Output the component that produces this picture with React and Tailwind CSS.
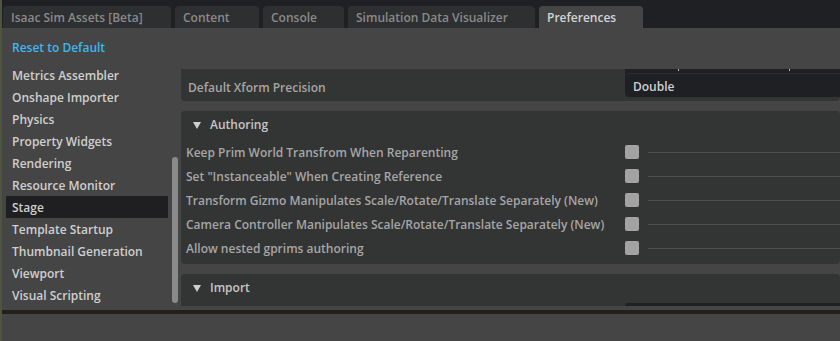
import React from "react";

const tabs = [
    { label: "Isaac Sim Assets [Beta]", w: "w-[168px]" },
    { label: "Content", w: "w-[84px]" },
    { label: "Console", w: "w-[81px]" },
    { label: "Simulation Data Visualizer", w: "w-[187px]" },
    { label: "Preferences", w: "w-[104px]", active: true },
];

const pages = [
    "Metrics Assembler",
    "Onshape Importer",
    "Physics",
    "Property Widgets",
    "Rendering",
    "Resource Monitor",
    "Stage",
    "Template Startup",
    "Thumbnail Generation",
    "Viewport",
    "Visual Scripting",
];

const authoring = [
    "Keep Prim World Transfrom When Reparenting",
    'Set "Instanceable" When Creating Reference',
    "Transform Gizmo Manipulates Scale/Rotate/Translate Separately (New)",
    "Camera Controller Manipulates Scale/Rotate/Translate Separately (New)",
    "Allow nested gprims authoring",
];

function Triangle() {
    return (
        <svg width="8" height="7" viewBox="0 0 8 7" className="shrink-0">
            <polygon points="0,0 8,0 4,7" fill="#cfcfcf" />
        </svg>
    );
}

function FrameHeader({ title }) {
    return (
        <div className="h-[29px] flex items-center gap-[9px] pl-[12px] pb-[1px] text-[#c6c6c6]">
            <Triangle />
            <span>{title}</span>
        </div>
    );
}

function CheckRow({ label }) {
    return (
        <div className="h-[24px] flex items-center">
            <span className="w-[444px] pl-[5px] pt-[2px] text-[#a6a6a6] whitespace-nowrap">{label}</span>
            <span className="w-[14px] h-[14px] rounded-[2px] bg-[#a2a2a2]" />
            <span className="flex-1 ml-[9px] h-px bg-[#4a4f4f]" />
        </div>
    );
}

export default function App() {
    return (
        <div className="w-[840px] h-[341px] bg-[#454545] flex flex-col overflow-hidden border-l-2 border-[#4d5540] font-['Open_Sans',sans-serif] font-semibold text-[12px] leading-none">
            {/* tab strip */}
            <div className="h-[28px] bg-[#1f2023] flex items-end gap-[4px] pl-[1px] shrink-0">
                {tabs.map((t) => (
                    <div
                        key={t.label}
                        className={`${t.w} h-[22px] rounded-t-[4px] flex items-center pl-[8px] pt-[2px] whitespace-nowrap ${
                            t.active ? "bg-[#454545] text-[#d4d4d4]" : "bg-[#2e2f31] text-[#8a8a8a]"
                        }`}
                    >
                        {t.label}
                    </div>
                ))}
            </div>

            {/* preferences window */}
            <div className="h-[36px] flex items-center pl-[10px] shrink-0">
                <span className="text-[#3db7ef] pt-[3px]">Reset to Default</span>
            </div>

            <div className="h-[246px] flex shrink-0">
                {/* page list */}
                <div className="w-[179px] flex shrink-0">
                    <div className="w-[166px] pl-[4px]">
                        {pages.map((p) => (
                            <div
                                key={p}
                                className={`h-[22px] flex items-center pl-[6px] pt-[2px] text-[#cfcfcf] ${
                                    p === "Stage" ? "bg-[#1f1f21]" : ""
                                }`}
                            >
                                {p}
                            </div>
                        ))}
                    </div>
                    <div className="ml-[4px] w-[6px] mt-[93px] h-[146px] rounded-[3px] bg-[#8a8a8a]" />
                </div>

                {/* settings scroll area */}
                <div className="flex-1 flex flex-col pt-[5px]">
                    <div className="h-[237px] overflow-hidden flex flex-col gap-[10px]">
                        <div className="h-[32px] shrink-0 bg-[#333434] rounded-b-[4px] flex items-start">
                            <span className="w-[444px] h-[28px] flex items-center pl-[7px] pt-[10px] text-[#a6a6a6]">
                                Default Xform Precision
                            </span>
                            <div className="flex-1 h-[28px] bg-[#1f2023] rounded-bl-[4px] flex flex-col">
                                <div className="h-[4px] flex">
                                    <span className="ml-[53px] w-px h-[2px] bg-[#bdbdbd]" />
                                    <span className="ml-[110px] w-px h-[2px] bg-[#bdbdbd]" />
                                </div>
                                <div className="flex-1 flex items-center pl-[8px] pt-[3px] text-[#cfcfcf] border-t border-[#2a2b2e] rounded-tl-[4px]">
                                    Double
                                </div>
                            </div>
                        </div>

                        <div className="shrink-0 bg-[#333434] rounded-[4px] pb-[4px]">
                            <FrameHeader title="Authoring" />
                            {authoring.map((a) => (
                                <CheckRow key={a} label={a} />
                            ))}
                        </div>

                        <div className="shrink-0 bg-[#333434] rounded-[4px] h-[60px]">
                            <FrameHeader title="Import" />
                            <div className="flex">
                                <span className="w-[444px]" />
                                <span className="flex-1 h-[24px] bg-[#1f2023] rounded-tl-[4px]" />
                            </div>
                        </div>
                    </div>
                </div>
            </div>

            <div className="h-[4px] bg-[#221f1c] shrink-0" />
            <div className="flex-1" />
        </div>
    );
}
